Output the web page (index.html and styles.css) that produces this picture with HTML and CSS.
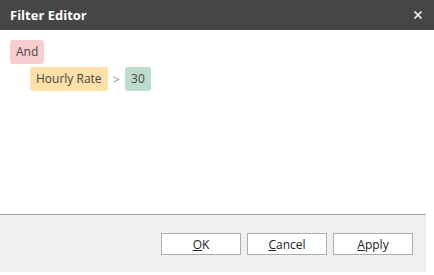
FILE: index.html
```html
<!DOCTYPE html>
<html lang="en">
<head>
  <meta charset="UTF-8">
  <meta name="viewport" content="width=device-width, initial-scale=1.0">
  <title>Filter Editor</title>
  <link rel="stylesheet" href="styles.css">
</head>
<body>
  <div class="dialog">
    <header class="title-bar">
      <h1>Filter Editor</h1>
      <button class="close-button" aria-label="Close">
        <svg width="8" height="8" viewBox="0 0 8 8"><path d="M0.5 0.5L7.5 7.5M7.5 0.5L0.5 7.5" stroke="#fff" stroke-width="1.5"/></svg>
      </button>
    </header>

    <!-- filter tree -->
    <div class="editor">
      <div class="row">
        <span class="chip group">And</span>
      </div>
      <div class="row nested">
        <span class="chip field">Hourly Rate</span>
        <span class="operator">&gt;</span>
        <span class="chip value">30</span>
      </div>
    </div>

    <footer class="buttons">
      <button class="dlg-button"><u>O</u>K</button>
      <button class="dlg-button"><u>C</u>ancel</button>
      <button class="dlg-button"><u>A</u>pply</button>
    </footer>
  </div>
</body>
</html>
```

FILE: styles.css
```css
body {
  margin: 0;
  font-family: "Open Sans", "Liberation Sans", sans-serif;
  background: #fff;
  color: #444;
}

.dialog {
  width: 434px;
  height: 275px;
  display: flex;
  flex-direction: column;
}

.title-bar {
  display: flex;
  justify-content: space-between;
  align-items: center;
  height: 30px;
  padding: 0 12px 0 10px;
  background-color: #464646;
}

h1 {
  margin: 0;
  font-size: 13px;
  font-weight: bold;
  color: #fff;
}

.close-button {
  background: none;
  border: none;
  padding: 0;
  width: 8px;
  height: 8px;
  display: flex;
  cursor: pointer;
}

/* filter tree */
.editor {
  flex: 1;
  padding: 10px 10px 0;
  border-bottom: 1px solid #a9a9a9;
  width: 406px;
}

.row {
  display: flex;
  align-items: center;
  gap: 5px;
  margin-bottom: 3px;
}

.nested {
  padding-left: 20px;
}

.chip {
  display: inline-block;
  height: 24px;
  line-height: 24px;
  padding: 0 6px;
  border-radius: 3px;
  font-size: 12px;
}

.group {
  background: #f8ced1;
}

.field {
  background: #fee1a8;
}

.value {
  background: #bedccb;
}

.operator {
  color: #999;
  font-size: 13px;
}

/* bottom buttons */
.buttons {
  display: flex;
  justify-content: flex-end;
  align-items: center;
  gap: 6px;
  width: 413px;
  height: 57px;
  padding-right: 13px;
  background: #f0f0f0;
  margin-bottom: 3px;
}

.dlg-button {
  width: 80px;
  height: 22px;
  background: #fff;
  border: 1px solid #adadad;
  font-family: "Open Sans", "Liberation Sans", sans-serif;
  font-size: 12px;
  color: #222;
  padding: 0;
  margin-top: 1px;
}
```
